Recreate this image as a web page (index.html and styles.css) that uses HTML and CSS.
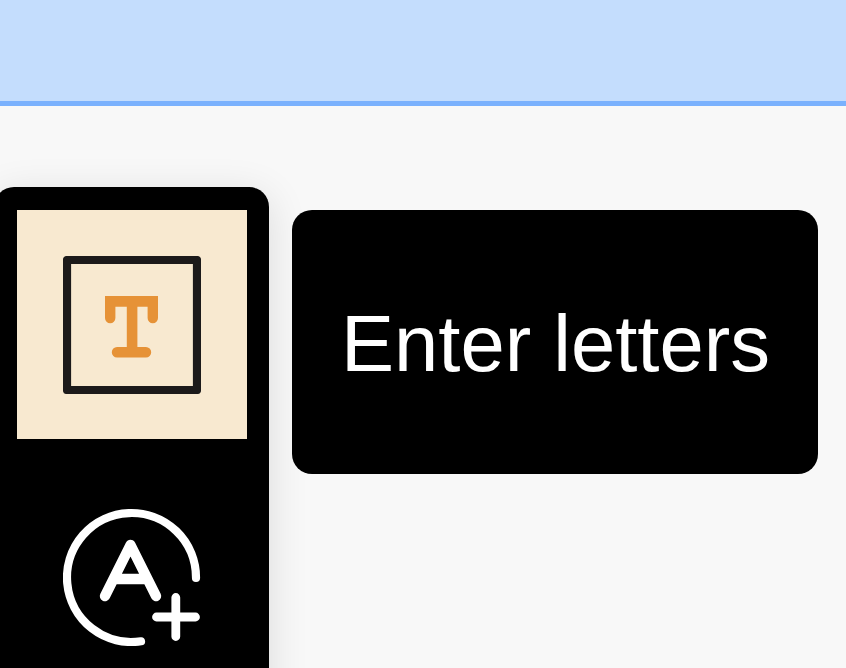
FILE: index.html
```html
<!DOCTYPE html>
<html lang="en">
<head>
    <meta charset="UTF-8">
    <meta name="viewport" content="width=device-width, initial-scale=1.0">
    <title>Enter letters</title>
    <link rel="stylesheet" href="styles.css">
</head>
<body>
    <header class="topbar"></header>
    <main class="content">
        <nav class="toolbar">
            <div class="tool tool-active">
                <svg class="tool-icon" viewBox="0 0 138 138">
                    <rect x="4" y="4" width="130" height="130" fill="none" stroke="#1c1a1a" stroke-width="8.2" stroke-linejoin="round"/>
                    <path fill="#e69237" d="M42 40H95V62a5.200 5.200 0 0 1-10.400 0V50.700H74.400V91H83a5.200 5.200 0 0 1 0 10.400H54a5.200 5.200 0 0 1 0-10.400H63.800V50.700H52.400V62a5.200 5.200 0 0 1-10.400 0Z"/>
                </svg>
            </div>
            <div class="tool">
                <svg class="tool-icon" viewBox="0 0 138 138" fill="none" stroke="#fff" stroke-linecap="round" stroke-linejoin="round">
                    <path stroke-width="8.2" d="M133 70A64.500 64.500 0 1 0 78 133.300"/>
                    <path stroke-width="10.400" d="M42 88L67.500 37L93 88M51 71H84"/>
                    <path stroke-width="8.800" d="M112.800 89.500V128.500M93.500 109H132.500"/>
                </svg>
            </div>
        </nav>
        <button class="enter-btn" type="button">Enter letters</button>
    </main>
</body>
</html>
```

FILE: styles.css
```css
html, body {
    height: 100%;
}
body {
    margin: 0;
    overflow: hidden;
    background-color: #f8f8f8;
    font-family: "Liberation Sans", Arial, sans-serif;
}
.topbar {
    height: 106px;
    box-sizing: border-box;
    background-color: #c4ddfd;
    border-bottom: 5px solid #7ab1fd;
}
.content {
    display: flex;
    align-items: flex-start;
    gap: 22.8px;
    padding-top: 81px;
    margin-left: -5.8px;
}
.toolbar {
    display: flex;
    flex-direction: column;
    gap: 22.67px;
    padding: 23px 22.5px;
    background: #000;
    border-radius: 20px;
    box-shadow: 0 8px 40px rgba(0, 0, 0, 0.12);
}
.tool {
    display: flex;
    align-items: center;
    justify-content: center;
    width: 230px;
    height: 229.33px;
}
.tool-active {
    background-color: #f8e9d0;
}
.tool-icon {
    display: block;
    width: 138px;
    height: 138px;
}
.enter-btn {
    width: 526px;
    height: 264px;
    margin-top: 23px;
    padding: 4px 0 0 1px;
    background: #000;
    color: #fff;
    border: none;
    border-radius: 20px;
    font-family: inherit;
    font-size: 79.6px;
    cursor: pointer;
}
```
